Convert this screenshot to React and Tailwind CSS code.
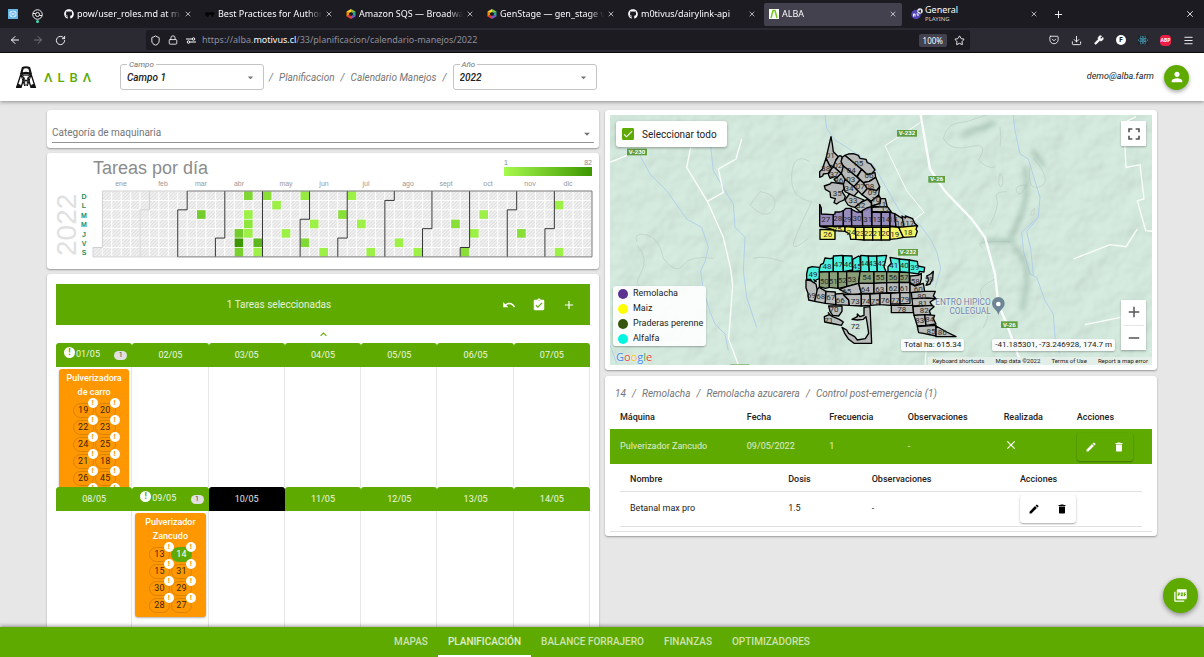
import { useState } from 'react';
import {
  ArrowLeft, ArrowRight, RotateCw, Shield, Lock, Star, X, Plus, Menu, Download, Wrench
} from 'lucide-react';
import { FaGithub, FaReact } from 'react-icons/fa';
import { FiPocket } from 'react-icons/fi';
import {
  MdAdd, MdArrowDropDown, MdAssignmentTurnedIn, MdCheck, MdClose, MdDelete, MdEdit,
  MdExpandLess, MdFullscreen, MdPerson, MdPictureAsPdf, MdRemove, MdUndo
} from 'react-icons/md';

/* ---------- browser chrome ---------- */

function HexIcon() {
  return (
    <svg viewBox="0 0 20 20" className="w-[10px] h-[10px] shrink-0">
      <path d="M10 0 19 5 14 8 10 6z" fill="#8bc34a" />
      <path d="M10 0 1 5 6 8 10 6z" fill="#fdd835" />
      <path d="M19 5v10l-5-3V8z" fill="#26a69a" />
      <path d="M1 5v10l5-3V8z" fill="#fb8c00" />
      <path d="M10 20 19 15 14 12 10 14z" fill="#7e57c2" />
      <path d="M10 20 1 15 6 12 10 14z" fill="#e53935" />
    </svg>
  );
}

function BearIcon() {
  return (
    <svg viewBox="0 0 20 12" className="w-[10px] h-[7px] shrink-0">
      <path d="M0 4 3 1l6 1 6-1 5 3-3 2-1 5h-2l-1-4H8l-2 4H4l0-4-3 3z" fill="#050505" />
    </svg>
  );
}

function AlbaFavicon() {
  return (
    <svg viewBox="0 0 20 20" className="w-[10px] h-[10px] shrink-0">
      <rect width="20" height="20" fill="#fff" />
      <path d="M4 18 8 3h4l4 15" fill="none" stroke="#76c81e" strokeWidth="3" />
    </svg>
  );
}

const tabs = [
  { title: 'pow/user_roles.md at ma', icon: <FaGithub className="w-[10px] h-[10px] shrink-0" /> },
  { title: 'Best Practices for Authoriz', icon: <BearIcon /> },
  { title: 'Amazon SQS — Broadway', icon: <HexIcon /> },
  { title: 'GenStage — gen_stage v1', icon: <HexIcon /> },
  { title: 'm0tivus/dairylink-api', icon: <FaGithub className="w-[10px] h-[10px] shrink-0" /> },
  { title: 'ALBA', icon: <AlbaFavicon />, active: true },
];

function TabBar() {
  return (
    <div className="h-[28px] bg-[#1c1b22] flex items-center text-[#fbfbfe] text-[9px] shrink-0">
      <svg viewBox="0 0 20 20" className="w-[10px] h-[10px] ml-[8px]">
        <rect width="20" height="20" fill="#64b5e8" />
        <path d="M4 6l6-2 6 2v8l-6 2-6-2zM4 6l12 8M16 6 4 14" fill="none" stroke="#e3f3fd" strokeWidth="1.6" />
      </svg>
      <div className="flex flex-col items-center ml-[14px]">
        <svg viewBox="0 0 22 22" className="w-[11px] h-[11px] mt-[3px]" fill="none" stroke="#eee" strokeWidth="2">
          <circle cx="11" cy="11" r="9.5" />
          <circle cx="11" cy="11" r="4" />
          <path d="M2 9h5M15 13h5" />
        </svg>
        <span className="w-[3px] h-[3px] rounded-full bg-[#3fe1b0]" />
      </div>
      <div className="flex gap-[3px] ml-[16px]">
        {tabs.map((tab) => (
          <div
            key={tab.title}
            className={`w-[138px] h-[23px] rounded-[2px] flex items-center pl-[5px] pr-[5px] gap-[3px] ${tab.active ? 'bg-[#42414d]' : ''}`}
          >
            {tab.icon}
            <span className="flex-1 overflow-hidden whitespace-nowrap [mask-image:linear-gradient(to_right,black_85%,transparent)]">
              {tab.title}
            </span>
            <button aria-label="Close tab"><X className="w-[8px] h-[8px]" /></button>
          </div>
        ))}
        <div className="w-[138px] h-[23px] flex items-center pl-[6px] pr-[5px] gap-[2px]">
          <svg viewBox="0 0 24 24" className="w-[12px] h-[12px] shrink-0">
            <circle cx="10" cy="13" r="9.5" fill="#5145b5" />
            <path d="M5 17v-5h3v5M11 12h3v4" stroke="#fff" strokeWidth="2" fill="none" />
            <circle cx="18" cy="6" r="5.5" fill="#e8e8ee" />
            <path d="M15 5h2l3-2v7l-3-2h-2z" fill="#333" />
          </svg>
          <span className="flex-1 flex flex-col">
            <span className="leading-[10px]">General</span>
            <span className="text-[6px] leading-[9px] text-[#c9c9d1]">PLAYING</span>
          </span>
          <button aria-label="Close tab"><X className="w-[8px] h-[8px]" /></button>
        </div>
      </div>
      <button aria-label="New tab" className="ml-[10px]"><Plus className="w-[11px] h-[11px]" /></button>
      <button aria-label="Close window" className="ml-auto mr-[9px]"><X className="w-[10px] h-[10px]" /></button>
    </div>
  );
}

function UrlBar() {
  return (
    <div className="h-[25px] bg-[#2b2a33] border-b border-[#0c0c0d] flex items-center text-[#fbfbfe] text-[9px] shrink-0">
      <button aria-label="Back" className="ml-[9px]"><ArrowLeft className="w-[12px] h-[12px]" /></button>
      <button aria-label="Forward" className="ml-[11px] text-[#77767f]"><ArrowRight className="w-[12px] h-[12px]" /></button>
      <button aria-label="Reload" className="ml-[11px]"><RotateCw className="w-[11px] h-[11px]" /></button>
      <div className="ml-[80px] h-[20px] flex-1 rounded-[2px] bg-[#1c1b22] flex items-center px-[4px]">
        <Shield className="w-[11px] h-[11px]" />
        <Lock className="w-[10px] h-[10px] ml-[7px]" />
        <svg viewBox="0 0 20 14" className="w-[10px] h-[7px] ml-[8px]" fill="none" stroke="#fbfbfe" strokeWidth="2">
          <path d="M0 4h12M8 10h12" />
          <circle cx="15" cy="4" r="2.5" />
          <circle cx="5" cy="10" r="2.5" />
        </svg>
        <span className="ml-[6px] text-[#8f8f99]">
          https://alba.<span className="text-[#fbfbfe]">motivus.cl</span>/33/planificacion/calendario-manejos/2022
        </span>
        <span className="ml-auto bg-[#42414d] rounded-[2px] h-[13px] px-[4px] text-[8px] leading-[13px]">100%</span>
        <Star className="w-[11px] h-[11px] ml-[7px] mr-[1px]" />
      </div>
      <div className="flex items-center gap-[12px] ml-[79px] mr-[10px]">
        <FiPocket className="w-[10px] h-[10px]" />
        <Download className="w-[11px] h-[11px]" />
        <Wrench className="w-[10px] h-[10px] fill-current" />
        <span className="w-[10px] h-[10px] rounded-full bg-white text-[#222] text-[7px] leading-[10px] font-bold text-center">F</span>
        <span className="bg-[#20232a]"><FaReact className="w-[10px] h-[10px] text-[#50b9d8]" /></span>
        <span className="w-[11px] h-[11px] rounded-[4px] bg-[#ed1e45] text-[5px] leading-[11px] font-bold text-center">ABP</span>
        <Menu className="w-[11px] h-[11px]" />
      </div>
    </div>
  );
}

/* ---------- app header ---------- */

function AlbaLogo() {
  return (
    <a href="#inicio" className="flex items-center gap-[8px]" aria-label="ALBA">
      <svg viewBox="0 0 60 66" className="w-[20px] h-[22px]">
        <path d="M18 3q12-4 24 0l6 21-9 6H21l-9-6z" fill="#111" />
        <path d="M23 8q7-3 14 0l3 11q-10-3-20 0z" fill="#fff" />
        <path d="M20 25h20l-4 4H24z" fill="#888" />
        <path d="M14 27 2 64h13l9-28zM46 27l12 37H45L36 36z" fill="#fff" stroke="#111" strokeWidth="4" />
        <path d="M16 30 26 60M44 30 34 60M22 34l8 12 8-12M26 42v12l4 5 4-5V42" fill="none" stroke="#111" strokeWidth="3" />
        <path d="M1 65l4-12 9 3 2 9zM59 65l-4-12-9 3-2 9z" fill="#111" />
      </svg>
      <span className="flex gap-[5px] text-[13px] leading-none text-[#5eaa00] font-medium">
        <span>Λ</span><span>L</span><span>B</span><span>Λ</span>
      </span>
    </a>
  );
}

function OutlinedSelect({ id, label, value }) {
  return (
    <div className="relative w-[144px] h-[26px] border border-[#c4c4c4] rounded-[3px]">
      <label htmlFor={id} className="absolute -top-[5px] left-[6px] px-[2px] bg-white text-[8px] leading-[9px] text-[#757575]">
        {label}
      </label>
      <select id={id} defaultValue={value} className="appearance-none w-full h-full px-[6px] italic font-medium text-[10px] text-[#222]">
        <option>{value}</option>
      </select>
      <MdArrowDropDown className="absolute right-[6px] top-[6px] w-[13px] h-[13px] text-[#757575] pointer-events-none" />
    </div>
  );
}

function Header() {
  return (
    <header className="relative z-10 h-[48px] bg-white shadow-[0_1px_4px_rgba(0,0,0,0.4)] flex items-center pl-[16px] pr-[15px] italic text-[10px] text-[#757575] shrink-0">
      <div className="w-[104px] not-italic"><AlbaLogo /></div>
      <OutlinedSelect id="campo" label="Campo" value="Campo 1" />
      <nav className="flex items-center gap-[6px] pl-[5px] pr-[6px]">
        <span>/</span>
        <a href="#planificacion">Planificacion</a>
        <span>/</span>
        <a href="#calendario">Calendario Manejos</a>
        <span>/</span>
      </nav>
      <OutlinedSelect id="anio" label="Año" value="2022" />
      <span className="ml-auto text-[#222] text-[9px]">demo@alba.farm</span>
      <button aria-label="Cuenta" className="ml-[10px] w-[25px] h-[25px] rounded-full bg-[#5eaa00] text-white flex items-center justify-center shadow-[0_2px_4px_rgba(0,0,0,0.35)]">
        <MdPerson className="w-[16px] h-[16px]" />
      </button>
    </header>
  );
}

/* ---------- tasks per day ---------- */

const months = [
  ['ene', 31, 28], ['feb', 28, 70], ['mar', 31, 108], ['abr', 30, 146], ['may', 31, 193], ['jun', 30, 231],
  ['jul', 31, 273], ['ago', 31, 315], ['sept', 30, 353], ['oct', 31, 395], ['nov', 30, 437], ['dic', 31, 475],
];

// [week, weekday, colour]
const taskDays = [
  [11, 2, '#73cc2c'], [16, 0, '#80d633'], [18, 0, '#8ade38'], [19, 1, '#9cf046'], [16, 2, '#9cf046'],
  [16, 3, '#8ee63c'], [15, 4, '#73cc2c'], [16, 4, '#9cf046'], [15, 5, '#3d9600'], [17, 5, '#5cb81c'],
  [15, 6, '#7ad02f'], [17, 6, '#9cf046'], [22, 0, '#98ea43'], [23, 3, '#9cf046'], [20, 4, '#9cf046'],
  [22, 5, '#80d935'], [24, 6, '#9cf046'], [27, 0, '#9cf046'], [26, 2, '#8ade38'], [28, 3, '#9cf046'],
  [29, 6, '#9cf046'], [32, 5, '#9cf046'], [34, 6, '#9cf046'], [38, 3, '#8ade38'], [39, 6, '#8ade38'],
  [40, 4, '#9cf046'], [41, 2, '#9cf046'], [45, 4, '#8ade38'], [49, 1, '#9cf046'], [49, 6, '#9cf046'],
];

const CELL = 9.415;
const FIRST_WEEKDAY = 6; // 2022 starts on a Saturday

function monthEdge(day) {
  const slot = day + FIRST_WEEKDAY;
  const col = Math.floor(slot / 7);
  const row = slot % 7;
  const x = col * CELL;
  const y = row * CELL;
  return row === 0
    ? `M${x} 0V${7 * CELL}`
    : `M${x + CELL} 0V${y}H${x}V${7 * CELL}`;
}

function CalendarChart() {
  const days = Array.from({ length: 365 }, (_, i) => i + FIRST_WEEKDAY);
  let total = 0;
  const edges = months.slice(0, -1).map(([name, length]) => {
    total += length;
    return { name, d: monthEdge(total) };
  });
  return (
    <svg viewBox="0 0 552 116" className="w-full font-['Liberation_Sans']">
      <defs>
        <pattern id="hatch" width="2.4" height="2.4" patternUnits="userSpaceOnUse" patternTransform="rotate(45)">
          <rect width="2.4" height="2.4" fill="#f4f4f4" />
          <rect width="1.1" height="2.4" fill="#dedede" />
        </pattern>
        <linearGradient id="scale">
          <stop offset="0" stopColor="#a6f94d" />
          <stop offset="1" stopColor="#3d9600" />
        </linearGradient>
      </defs>
      <text x="46" y="21" fontSize="18" fill="#8c8c8c">Tareas por día</text>
      <text x="457" y="12" fontSize="7" fill="#888">1</text>
      <text x="545" y="12" fontSize="7" fill="#888" textAnchor="end">82</text>
      <rect x="457" y="14" width="88" height="9" fill="url(#scale)" />
      <text transform="translate(29 103) rotate(-90)" fontSize="28" fill="#e0e0e0">2022</text>
      {['D', 'L', 'M', 'M', 'J', 'V', 'S'].map((d, i) => (
        <text key={i} x="37" y={46 + i * CELL} fontSize="7" fontWeight="bold" fill="#1f8f63" textAnchor="middle">{d}</text>
      ))}
      <g transform="translate(46 38)">
        {months.map(([name, , x]) => (
          <text key={name} x={x} y="-5" fontSize="7" fill="#999" textAnchor="middle">{name}</text>
        ))}
        {days.map((n) => (
          <rect key={n} x={Math.floor(n / 7) * CELL} y={(n % 7) * CELL} width={CELL} height={CELL} fill="url(#hatch)" stroke="#fff" strokeWidth="0.8" />
        ))}
        {taskDays.map(([week, day, color]) => (
          <rect key={`${week}-${day}`} x={week * CELL + 0.4} y={day * CELL + 0.4} width={CELL - 0.8} height={CELL - 0.8} fill={color} />
        ))}
        <path d={`M${CELL} 0V${6 * CELL}H0V${7 * CELL}H${9 * CELL}M${CELL} 0H${10 * CELL}`} fill="none" stroke="#d0d0d0" />
        {edges.map(({ name, d }, i) => (
          <path key={name} d={d} fill="none" stroke={i === 0 ? '#cfcfcf' : '#333'} />
        ))}
        <path d={`M${10 * CELL} 0H${53 * CELL}V${7 * CELL}H${9 * CELL}`} fill="none" stroke="#777" />
      </g>
    </svg>
  );
}

/* ---------- planner ---------- */

const weeks = [
  [
    { date: '01/05', task: { name: 'Pulverizadora de carro', lots: [19, 20, 22, 23, 24, 25, 21, 18, 26, 45, 46, 47] } },
    { date: '02/05' }, { date: '03/05' }, { date: '04/05' }, { date: '05/05' }, { date: '06/05' }, { date: '07/05' },
  ],
  [
    { date: '08/05' },
    { date: '09/05', task: { name: 'Pulverizador Zancudo', lots: [13, 14, 15, 31, 30, 29, 28, 27] } },
    { date: '10/05', today: true },
    { date: '11/05' }, { date: '12/05' }, { date: '13/05' }, { date: '14/05' },
  ],
];

function TaskCard({ task, selected, onSelect }) {
  return (
    <div className="bg-[#ff9800] rounded-[3px] pt-[2px] pb-[4px] shadow-[0_1px_2px_rgba(0,0,0,0.3)]">
      <p className="w-[60px] mx-auto text-center text-white font-medium text-[9px] leading-[14px]">{task.name}</p>
      <div className="grid grid-cols-[21px_21px] justify-center gap-x-[1px] gap-y-[2px] mt-[4px]">
        {task.lots.map((lot) => (
          <button
            key={lot}
            onClick={() => onSelect(lot)}
            className={`relative h-[15px] rounded-full border text-[9px] leading-[13px] ${
              lot === selected ? 'bg-[#5eaa00] border-[#5eaa00] text-white' : 'border-[#d98200] text-[#3d2500]'
            }`}
          >
            {lot}
            <span className="absolute z-10 -top-[6px] -right-[5px] w-[10px] h-[10px] rounded-full bg-white text-[#ff9800] text-[8px] leading-[10px] font-bold">!</span>
          </button>
        ))}
      </div>
    </div>
  );
}

function DayHeader({ day }) {
  if (!day.task) {
    return <div className={`h-[24px] rounded-t-[3px] text-center leading-[24px] ${day.today ? 'bg-black' : 'bg-[#5eaa00]'}`}>{day.date}</div>;
  }
  return (
    <div className="h-[24px] rounded-t-[3px] bg-[#5eaa00] flex items-center pl-[8px] pr-[5px]">
      <span className="w-[11px] h-[11px] mb-[5px] rounded-full bg-white text-[#5eaa00] font-bold leading-[11px] text-center">!</span>
      <span className="ml-[1px]">{day.date}</span>
      <span className="ml-auto w-[13px] h-[9px] rounded-full bg-[#e0e0e0] text-[#444] text-[7px] leading-[9px] text-center">1</span>
    </div>
  );
}

function Planner() {
  const [selected, setSelected] = useState(14);
  return (
    <section className="bg-white rounded-[3px] shadow-[0_1px_2px_rgba(0,0,0,0.35)] px-[9px] py-[10px]">
      <div className="h-[41px] bg-[#5eaa00] text-white flex items-center pr-[14px]">
        <span className="flex-1 text-center text-[10px] text-white/85">1 Tareas seleccionadas</span>
        <div className="flex gap-[16px]">
          <button aria-label="Deshacer"><MdUndo className="w-[14px] h-[14px]" /></button>
          <button aria-label="Completar"><MdAssignmentTurnedIn className="w-[14px] h-[14px]" /></button>
          <button aria-label="Agregar"><MdAdd className="w-[14px] h-[14px]" /></button>
        </div>
      </div>
      <button aria-label="Semana anterior" className="flex w-full h-[18px] items-center justify-center text-[#5eaa00]">
        <MdExpandLess className="w-[13px] h-[13px]" />
      </button>
      {weeks.map((week) => (
        <div key={week[0].date} className="grid grid-cols-7">
          {week.map((day) => (
            <div key={day.date} className="h-[144px] flex flex-col text-[9px] text-white/90">
              <DayHeader day={day} />
              <div className="flex-1 min-h-0 overflow-hidden border-r border-[#e6e6e6] first-of-type:border-l-0 pl-[3px] pr-[2px] pt-[2px]">
                {day.task && <TaskCard task={day.task} selected={selected} onSelect={setSelected} />}
              </div>
            </div>
          ))}
        </div>
      ))}
    </section>
  );
}

/* ---------- map ---------- */

const cropColors = { g: '#b5b7b6', p: '#9183b8', y: '#f5f55b', c: '#3ff0de', o: '#82986f' };

// [lot, crop, outline, label x, label y]
const lots = [
  ['01', 'g', '153,50 157,72 160,95 175,110 168,120 160,140 148,135 138,115', 151, 106],
  ['38', 'g', '138,115 148,135 155,145 144,160 130,162 128,168 119,172 119,155 127,148', 137, 144],
  ['02', 'g', '175,110 180,107 186,110 185,128 195,150 183,160 160,140 168,120', 173, 135],
  ['37', 'g', '155,145 162,141 183,160 172,172 165,170 150,175 145,163', 162, 163],
  ['36', 'g', '172,172 183,160 206,182 196,192 170,188 162,178', 176, 180],
  ['04', 'g', '187,112 195,106 245,148 230,170 190,138 183,125', 214, 150],
  ['05', 'g', '195,106 205,102 220,101 235,106 240,115 258,118 262,128 272,132 285,150 276,160 262,164 245,148', 236, 130],
  ['03', 'g', '190,138 230,170 240,180 222,200 195,178 184,160', 212, 178],
  ['06', 'g', '245,148 262,164 276,160 285,158 287,172 268,184 250,188 232,170', 267, 167],
  ['34', 'g', '195,178 222,200 235,214 222,228 195,215 190,194', 207, 204],
  ['07', 'g', '240,180 250,188 262,206 246,224 222,200', 241, 199],
  ['08', 'g', '268,184 287,172 294,188 299,200 290,212 262,206 250,188', 269, 199],
  ['09', 'g', '262,206 290,212 299,200 296,225 274,244 246,224', 277, 218],
  ['33', 'g', '208,222 222,228 252,240 242,248 225,262 215,260 204,255 195,240', 219, 240],
  ['32', 'g', '225,262 242,248 262,238 274,250 274,262 258,272 240,275', 242, 256],
  ['10', 'g', '274,244 296,225 302,236 300,252 276,258', 287, 238],
  ['11', 'g', '276,258 300,250 302,236 316,236 322,262 308,262', 305, 252],
  ['12', 'g', '276,262 322,260 334,276 304,276 276,274', 316, 268],
  ['35', 'g', '133,198 150,192 155,187 190,192 192,208 186,214 196,230 192,240 178,246 170,252 162,248 166,236 152,232 150,216 136,208', 172, 219],
  ['27', 'p', '119,253 124,264 124,282 160,284 160,318 119,318', 137, 298],
  ['28', 'p', '160,284 165,282 165,276 180,276 190,272 190,318 160,318', 173, 296],
  ['29', 'p', '190,272 198,265 214,265 215,318 190,318', 201, 298],
  ['30', 'p', '215,268 230,276 247,277 248,318 215,318', 231, 296],
  ['31', 'p', '247,272 260,264 274,260 276,318 248,318', 263, 298],
  ['13', 'p', '276,276 304,278 304,318 276,318', 291, 298],
  ['14', 'p', '304,276 330,277 330,318 304,318', 317, 298],
  ['15', 'p', '330,277 344,281 348,320 330,318', 339, 298],
  ['16', 'g', '344,281 358,290 374,298 372,322 348,320', 361, 309],
  ['17', 'g', '366,288 376,294 376,288 398,296 404,310 413,318 372,322', 389, 309],
  ['26', 'y', '120,328 165,330 165,358 120,358', 143, 342],
  ['25', 'y', '120,320 195,320 195,334 168,332 150,326', 172, 328],
  ['24', 'y', '195,320 226,322 228,358 212,358 209,342 195,334', 213, 337],
  ['23', 'y', '226,322 252,322 252,360 228,358', 240, 341],
  ['22', 'y', '252,322 278,322 278,360 252,360', 265, 341],
  ['21', 'y', '278,322 304,322 304,360 278,360', 291, 341],
  ['20', 'y', '304,322 330,322 330,360 304,360', 317, 341],
  ['19', 'y', '330,320 356,322 370,352 352,356 330,358', 344, 342],
  ['18', 'y', '356,322 412,317 408,328 412,334 406,350 370,352', 384, 337],
  ['49', 'c', '84,444 96,440 118,442 120,456 118,476 108,480 100,492 92,478 80,478 80,462', 99, 463],
  ['48', 'c', '118,448 122,434 130,430 135,414 150,416 160,414 160,455 118,456', 141, 438],
  ['47', 'c', '160,408 188,406 190,455 160,455', 175, 432],
  ['46', 'c', '190,407 216,408 218,450 190,455', 205, 432],
  ['45', 'c', '218,418 236,408 240,412 242,452 218,455', 231, 440],
  ['44', 'c', '242,406 265,408 268,455 242,455', 253, 431],
  ['43', 'c', '265,408 290,408 292,455 268,455', 278, 431],
  ['42', 'c', '290,408 320,406 312,440 318,455 292,455', 305, 431],
  ['41', 'c', '330,412 358,417 360,456 324,455 324,440 334,430', 341, 436],
  ['40', 'c', '358,417 388,420 388,458 360,456', 373, 437],
  ['39', 'c', '388,420 412,424 414,438 434,442 432,456 418,454 416,462 388,458', 404, 443],
  ['50', 'o', '118,456 148,455 148,502 136,505 118,500', 133, 483],
  ['51', 'o', '148,455 174,455 174,505 148,502', 160, 485],
  ['52', 'o', '174,455 200,455 200,500 174,505', 187, 482],
  ['53', 'o', '200,455 240,455 236,490 200,500', 215, 477],
  ['54', 'o', '240,455 282,455 282,490 236,490', 260, 471],
  ['55', 'o', '282,455 320,455 320,488 282,490', 300, 471],
  ['56', 'o', '320,455 358,456 358,487 320,488', 339, 472],
  ['57', 'o', '358,456 388,458 388,487 358,487', 372, 472],
  ['58', 'g', '390,468 414,466 424,460 424,476 420,490 404,496 390,488', 406, 483],
  ['59', 'g', '440,468 452,462 460,454 458,474 450,492 438,496 446,480', 448, 478],
  ['65', 'g', '178,508 200,500 236,490 244,520 226,526 205,522', 200, 514],
  ['64', 'g', '236,490 282,490 282,520 244,520', 256, 508],
  ['63', 'g', '282,490 320,488 320,518 282,520', 299, 508],
  ['62', 'g', '320,488 358,487 358,518 320,518', 339, 505],
  ['61', 'g', '358,487 390,488 390,518 358,518', 373, 505],
  ['60', 'g', '390,490 404,498 430,490 434,514 390,518', 415, 507],
  ['69', 'g', '78,480 92,482 108,492 112,512 104,544 86,540 84,520 78,504', 94, 527],
  ['68', 'g', '112,508 118,502 138,514 136,550 104,544', 122, 528],
  ['67', 'g', '138,514 166,516 168,554 136,550', 152, 532],
  ['66', 'g', '166,522 190,520 206,540 208,556 168,554', 181, 541],
  ['73', 'g', '190,524 244,522 244,558 208,556 206,540', 226, 543],
  ['74', 'g', '244,522 270,522 272,556 244,558', 257, 543],
  ['75', 'g', '270,522 300,520 300,554 272,556', 286, 543],
  ['76', 'g', '300,520 332,520 332,556 300,554', 316, 540],
  ['77', 'g', '332,520 360,518 360,552 332,552', 346, 540],
  ['79', 'g', '360,518 390,518 390,550 360,552', 374, 538],
  ['80', 'g', '394,518 434,514 466,514 460,528 468,536 396,536', 425, 528],
  ['81', 'g', '396,536 444,534 466,536 450,546 456,556 398,558', 428, 549],
  ['82', 'g', '398,560 456,556 462,560 448,572 452,584 402,586', 433, 571],
  ['78', 'g', '334,556 398,556 400,578 334,578', 365, 568],
  ['83', 'g', '402,586 434,584 438,616 412,618', 419, 602],
  ['84', 'g', '434,584 464,586 460,596 468,612 438,616', 449, 599],
  ['85', 'g', '412,620 468,616 468,648 430,640 416,638', 453, 633],
  ['86', 'g', '468,618 500,636 528,650 468,650', 487, 638],
  ['70', 'g', '146,558 186,558 186,574 176,588 158,586 150,574', 162, 567],
  ['71', 'g', '133,590 148,584 158,590 178,598 190,606 184,616 164,612 134,606', 146, 602],
  ['72', 'g', '252,562 270,560 275,670 222,670 206,658 194,640 186,622 200,630 206,640 224,650 232,660 256,656 266,640 262,612 258,590 250,598 232,600 216,598 232,590 232,582 240,590 252,586', 226, 618],
];

const roadSigns = [
  ['V-230', 81, 111, 60], ['V-232', 891, 55, 60], ['V-26', 980, 193, 50], ['V-232', 894, 412, 60], ['V-26', 1198, 629, 50],
];

function Terrain() {
  return (
    <svg viewBox="0 0 1626 750" preserveAspectRatio="xMidYMid slice" className="absolute inset-0 w-full h-full font-['Roboto']">
      <defs>
        <filter id="relief" x="0" y="0" width="100%" height="100%">
          <feTurbulence type="fractalNoise" baseFrequency="0.012" numOctaves="3" seed="12" />
          <feDiffuseLighting surfaceScale="10" diffuseConstant="1.16" lightingColor="#d3e8dc">
            <feDistantLight azimuth="225" elevation="60" />
          </feDiffuseLighting>
        </filter>
        <filter id="soft" x="-20%" y="-20%" width="140%" height="140%">
          <feGaussianBlur stdDeviation="8" />
        </filter>
      </defs>
      <rect width="1626" height="750" fill="#d3e8dc" />
      <rect width="1626" height="750" filter="url(#relief)" opacity="0.35" />

      <g fill="none" stroke="#b2d0ea" strokeWidth="3">
        <path d="M90 122 120 177 170 227 230 312 275 337 295 397 285 440 272 467 280 527 300 590 315 627 345 657 355 707" />
        <path d="M300 77 310 167 345 227 370 267 375 337 405 367 400 467 410 547 440 637" />
        <path d="M645 0 650 40 675 75 730 110 790 150 830 220 870 290 930 330 960 370 980 410 992 460 975 520" />
        <path d="M1210 0 1215 47 1230 117 1255 132 1270 182 1290 247 1285 307 1235 352 1240 407 1260 477 1280 487 1305 557 1330 597 1335 667 1350 717" />
        <path d="M1285 307 1250 350 1262 400 1270 480" />
        <path d="M0 690 20 745" />
      </g>
      <g fill="none" stroke="#b9cbc1" strokeWidth="2">
        <path d="M1000 70q10-50 70-50l60-20M1000 70q20 40 80 25t25 40q30 30 50 20M1140 330q30-60 20-80t30-20M1170 95q5-30 0-60" />
        <path d="M80 380q-10-30 30-20t50 70q40 50 60 20t90-20M80 390q40 40 10 90t60 50" />
        <path d="M600 140q-50-30-55 40t60 80q-30 60-50 110t40 0M420 270q50 50 70 10t-40-50zM430 430q30-10 90 10" />
        <path d="M1170 175q15 20 5 40-15 0-5-40zM1250 210q-20 40-30 20t30-20zM1120 400q-30-20 30-20h50M1260 300q20-40 10 0z" />
        <path d="M1270 130q60 70 20 85t-30-60M1120 640q30-60 0-90t40-60" />
      </g>
      <g fill="none" stroke="#8fae9f" strokeWidth="16" opacity="0.5" strokeLinecap="round" filter="url(#soft)">
        <path d="M1245 160q20 100-40 200" />
        <path d="M1060 60l90-35M1270 110l30 40M1120 378h90M1215 400q60 50 20 180" />
      </g>

      <g fill="none" stroke="#fbfdfc" strokeWidth="4">
        <path d="M242 97 230 157 292 259 340 367 362 462 368 512 356 672 385 750M292 259 340 232 325 162 378 132 395 72M0 142 50 122" />
        <path d="M932 22 825 92 890 227 942 292 905 320M875 425 890 460M950 680 945 750" strokeWidth="3" />
        <path d="M1390 432 1500 389 1548 395 1582 342M1545 97 1548 157 1590 149 1602 252 1582 257 1607 347 1628 349M1545 97 1535 27 1578 5M1425 629 1532 607" />
        <path d="M932 0 960 162 1005 229 1085 312 1125 367 1155 477 1165 567 1190 627 1235 750" strokeWidth="7" />
      </g>

      {roadSigns.map(([name, x, y, w]) => (
        <g key={`${name}-${x}`}>
          <rect x={x - w / 2} y={y - 10} width={w} height="20" fill="#5f9e3f" />
          <text x={x} y={y + 6} fontSize="18" fontWeight="bold" fill="#fff" textAnchor="middle">{name}</text>
        </g>
      ))}
      <rect x="360" y="748" width="58" height="4" fill="#7cab62" />

      <g fontSize="25" fill="#6f83a5" textAnchor="end" stroke="#e8f2ec" strokeWidth="3" paintOrder="stroke">
        <text x="1142" y="571">ENTRO HIPICO</text>
        <text x="1142" y="597">COLEGUAL</text>
      </g>
      <path d="M1165 600q-2-10-14-22a19 19 0 1 1 28 0q-12 12-14 22z" fill="#6d8596" />
      <circle cx="1165" cy="567" r="7" fill="#fff" />

      <g transform="translate(510 15)">
        <g stroke="#000" strokeWidth="4" strokeLinejoin="round">
          {lots.map(([lot, crop, points]) => (
            <polygon key={lot} points={points} fill={cropColors[crop]} fillOpacity="0.92" />
          ))}
          <path d="M100 478l10 8M150 585l-6-8" fill="none" />
        </g>
        <g fontSize="24" fill="#2b2b2b" textAnchor="middle">
          {lots.map(([lot, , , x, y]) => (
            <text key={lot} x={x} y={y + 8}>{lot}</text>
          ))}
        </g>
      </g>
    </svg>
  );
}

const crops = [
  ['Remolacha', 'bg-[#5b3192]'], ['Maiz', 'bg-[#ffff00]'], ['Praderas perenne', 'bg-[#36560f]'], ['Alfalfa', 'bg-[#00f5e1]'],
];

function FieldMap() {
  const [all, setAll] = useState(true);
  return (
    <section className="bg-white rounded-[3px] shadow-[0_1px_2px_rgba(0,0,0,0.35)] p-[5px]">
      <div className="relative h-[250px] overflow-hidden text-[#222]">
        <Terrain />
        <label className="absolute left-[6px] top-[6px] h-[26px] pl-[6px] pr-[10px] bg-white rounded-[3px] shadow-[0_1px_3px_rgba(0,0,0,0.35)] flex items-center gap-[8px] text-[10px]">
          <span className="relative w-[12px] h-[12px]">
            <input
              type="checkbox"
              checked={all}
              onChange={(e) => setAll(e.target.checked)}
              className="appearance-none block w-[12px] h-[12px] rounded-[1px] border border-[#5eaa00] checked:bg-[#5eaa00]"
            />
            <MdCheck className="absolute inset-0 w-[12px] h-[12px] text-white pointer-events-none" />
          </span>
          Seleccionar todo
        </label>
        <button aria-label="Pantalla completa" className="absolute right-[6px] top-[6px] w-[25px] h-[25px] bg-white shadow-[0_1px_2px_rgba(0,0,0,0.3)] flex items-center justify-center text-[#555]">
          <MdFullscreen className="w-[20px] h-[20px]" />
        </button>
        <div className="absolute right-[6px] bottom-[15px] w-[25px] h-[50px] px-[2px] bg-white shadow-[0_1px_2px_rgba(0,0,0,0.3)] flex flex-col text-[#555]">
          <button aria-label="Acercar" className="flex-1 flex items-center justify-center border-b border-[#e6e6e6]"><MdAdd className="w-[18px] h-[18px] stroke-current" /></button>
          <button aria-label="Alejar" className="flex-1 flex items-center justify-center"><MdRemove className="w-[18px] h-[18px] stroke-current" /></button>
        </div>
        <ul className="absolute left-[3px] bottom-[19px] w-[93px] bg-white/90 rounded-[3px] shadow-[0_1px_2px_rgba(0,0,0,0.3)] pl-[5px] text-[9px] leading-[15px]">
          {crops.map(([name, color]) => (
            <li key={name} className="flex items-center gap-[5px] whitespace-nowrap">
              <span className={`w-[10px] h-[10px] rounded-full ${color}`} />
              {name}
            </li>
          ))}
        </ul>
        <span className="absolute left-[6px] bottom-[1px] text-[11px] leading-[14px] font-medium font-['Open_Sans'] [text-shadow:0_0_2px_white]">
          <span className="text-[#4285f4]">G</span><span className="text-[#ea4335]">o</span><span className="text-[#fbbc05]">o</span><span className="text-[#4285f4]">g</span><span className="text-[#34a853]">l</span><span className="text-[#ea4335]">e</span>
        </span>
        <div className="absolute right-[37px] bottom-[14px] flex gap-[28px] text-[8px] leading-[12px]">
          <span className="bg-white/85 rounded-[2px] px-[3px] shadow-[0_1px_2px_rgba(0,0,0,0.25)]">Total ha: 615.34</span>
          <span className="bg-white/85 rounded-[2px] px-[3px] shadow-[0_1px_2px_rgba(0,0,0,0.25)]">-41.185301, -73.246928, 174.7 m</span>
        </div>
        <div className="absolute right-0 bottom-0 flex gap-[11px] px-[4px] bg-[#e6f0ea]/80 text-[6px] leading-[8px]">
          <button>Keyboard shortcuts</button>
          <span>Map data ©2022</span>
          <a href="#terms">Terms of Use</a>
          <a href="#report">Report a map error</a>
        </div>
      </div>
    </section>
  );
}

/* ---------- task detail ---------- */

function RowActions({ dark }) {
  return (
    <div className={`w-[56px] h-[28px] rounded-[3px] flex items-center justify-around shadow-[0_1px_2px_rgba(0,0,0,0.35)] ${dark ? 'bg-[#5eaa00] text-white' : 'bg-white text-black'}`}>
      <button aria-label="Editar"><MdEdit className="w-[12px] h-[12px]" /></button>
      <button aria-label="Eliminar"><MdDelete className="w-[12px] h-[12px]" /></button>
    </div>
  );
}

function TaskDetail() {
  return (
    <section className="bg-white rounded-[3px] shadow-[0_1px_2px_rgba(0,0,0,0.35)] px-[5px] pt-[10px] pb-[4px] text-[9px] text-[#222]">
      <nav className="flex gap-[6px] pl-[5px] italic text-[10px] leading-[15px] text-[#757575]">
        <span>14</span><span>/</span><span>Remolacha</span><span>/</span><span>Remolacha azucarera</span><span>/</span><span>Control post-emergencia (1)</span>
      </nav>
      <table className="w-full table-fixed text-left border-b border-[#e0e0e0]">
        <colgroup>
          <col className="w-[23.4%]" /><col className="w-[15.2%]" /><col className="w-[14.5%]" />
          <col className="w-[17.7%]" /><col className="w-[13.5%]" /><col />
        </colgroup>
        <thead>
          <tr className="h-[28px]">
            {['Máquina', 'Fecha', 'Frecuencia', 'Observaciones', 'Realizada', 'Acciones'].map((name) => (
              <th key={name} className="pl-[10px] font-medium pt-[5px]">{name}</th>
            ))}
          </tr>
        </thead>
        <tbody>
          <tr className="h-[35px] bg-[#5eaa00] text-white/80">
            <td className="pl-[10px]">Pulverizador Zancudo</td>
            <td className="pl-[10px]">09/05/2022</td>
            <td className="pl-[10px]">1</td>
            <td className="pl-[10px]">-</td>
            <td className="pl-[10px] pb-[4px]"><MdClose className="w-[14px] h-[14px] text-white" aria-label="No realizada" /></td>
            <td className="pl-[10px]"><RowActions dark /></td>
          </tr>
          <tr>
            <td colSpan={6} className="px-[10px] pb-[4px]">
              <table className="w-full table-fixed text-left">
                <colgroup>
                  <col className="w-[30.3%]" /><col className="w-[16%]" /><col className="w-[28.4%]" /><col />
                </colgroup>
                <thead>
                  <tr className="h-[27px] border-b border-[#e0e0e0]">
                    {['Nombre', 'Dosis', 'Observaciones', 'Acciones'].map((name) => (
                      <th key={name} className="pl-[10px] font-medium pt-[5px]">{name}</th>
                    ))}
                  </tr>
                </thead>
                <tbody>
                  <tr className="h-[35px] border-b border-[#e0e0e0]">
                    <td className="pl-[10px]">Betanal max pro</td>
                    <td className="pl-[10px]">1.5</td>
                    <td className="pl-[10px]">-</td>
                    <td className="pl-[10px]"><RowActions /></td>
                  </tr>
                </tbody>
              </table>
            </td>
          </tr>
        </tbody>
      </table>
    </section>
  );
}

/* ---------- page ---------- */

const sections = ['MAPAS', 'PLANIFICACIÓN', 'BALANCE FORRAJERO', 'FINANZAS', 'OPTIMIZADORES'];

export default function App() {
  return (
    <div className="h-screen flex flex-col overflow-hidden bg-[#e7e7e7] font-['Roboto',sans-serif]">
      <div className="font-['Noto_Sans',sans-serif] shrink-0">
        <TabBar />
        <UrlBar />
      </div>
      <Header />
      <main className="flex-1 min-h-0 overflow-hidden px-[47px] pt-[9px] grid grid-cols-2 gap-[6px] items-start">
        <div className="flex flex-col gap-[5px]">
          <section className="h-[38px] bg-white rounded-[3px] shadow-[0_1px_2px_rgba(0,0,0,0.35)] px-[5px] pt-[13px]">
            <div className="relative h-[20px] border-b border-[#949494]">
              <select aria-label="Categoría de maquinaria" className="appearance-none block w-full h-[20px] text-[10px] leading-[20px] text-[#757575]">
                <option>Categoría de maquinaria</option>
              </select>
              <MdArrowDropDown className="absolute right-0 top-[4px] w-[14px] h-[14px] text-[#757575] pointer-events-none" />
            </div>
          </section>
          <section className="bg-white rounded-[3px] shadow-[0_1px_2px_rgba(0,0,0,0.35)]">
            <CalendarChart />
          </section>
          <Planner />
        </div>
        <div className="flex flex-col gap-[6px]">
          <FieldMap />
          <TaskDetail />
        </div>
      </main>
      <nav className="relative z-10 h-[30px] bg-[#5eaa00] shadow-[0_-1px_4px_rgba(0,0,0,0.4)] flex justify-center text-[10px] font-medium shrink-0">
        {sections.map((name) => (
          <a
            key={name}
            href={`#${name.toLowerCase()}`}
            className={`px-[10px] leading-[30px] ${name === 'PLANIFICACIÓN' ? 'text-white/80 border-b-2 border-white' : 'text-white/70'}`}
          >
            {name}
          </a>
        ))}
      </nav>
      <button aria-label="Exportar PDF" className="fixed z-20 right-[6px] bottom-[44px] w-[35px] h-[35px] rounded-full bg-[#5eaa00] text-white flex items-center justify-center shadow-[0_2px_5px_rgba(0,0,0,0.4)]">
        <MdPictureAsPdf className="w-[15px] h-[15px]" />
      </button>
    </div>
  );
}
